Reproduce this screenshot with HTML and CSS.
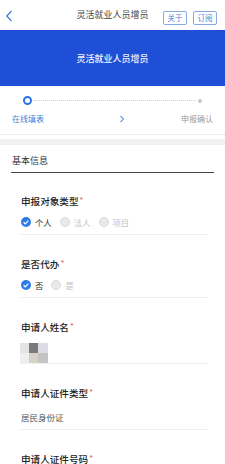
FILE: index.html
```html
<!DOCTYPE html>
<html lang="zh">
<head>
<meta charset="utf-8">
<link rel="stylesheet" href="styles.css">
</head>
<body>
<header class="nav">
  <svg class="back" width="8" height="12" viewBox="0 0 8 12"><path d="M6.5 1 L1.8 6 L6.5 11" fill="none" stroke="#4f86dc" stroke-width="1.4"/></svg>
  <div class="nav-title">灵活就业人员增员</div>
  <div class="nav-btns">
    <span class="nav-btn">关于</span>
    <span class="nav-btn">订阅</span>
  </div>
</header>
<div class="banner">灵活就业人员增员</div>
<section class="steps">
  <div class="track">
    <span class="dot-on"></span>
    <span class="track-line"></span>
    <span class="dot-off"></span>
  </div>
  <div class="step-labels">
    <span class="step-active">在线填表</span>
    <svg width="6" height="8" viewBox="0 0 6 8"><path d="M1.5 1 L4.5 4 L1.5 7" fill="none" stroke="#6b9be0" stroke-width="1.1"/></svg>
    <span class="step-next">申报确认</span>
  </div>
</section>
<div class="band"></div>
<div class="sec-title">基本信息</div>
<div class="field first">
  <div class="label">申报对象类型<span class="req">*</span></div>
  <div class="control radios">
    <span class="radio on"><i class="circ"><svg width="10" height="10" viewBox="0 0 10 10"><path d="M2.6 5.2 L4.3 6.8 L7.4 3.6" fill="none" stroke="#fff" stroke-width="1.2"/></svg></i>个人</span>
    <span class="radio off"><i class="circ"></i>法人</span>
    <span class="radio off"><i class="circ"></i>项目</span>
  </div>
</div>
<div class="field">
  <div class="label">是否代办<span class="req">*</span></div>
  <div class="control radios">
    <span class="radio on"><i class="circ"><svg width="10" height="10" viewBox="0 0 10 10"><path d="M2.6 5.2 L4.3 6.8 L7.4 3.6" fill="none" stroke="#fff" stroke-width="1.2"/></svg></i>否</span>
    <span class="radio off"><i class="circ"></i>是</span>
  </div>
</div>
<div class="field">
  <div class="label">申请人姓名<span class="req">*</span></div>
  <div class="control-name">
    <div class="mosaic">
      <span class="m1"></span><span class="m2"></span><span class="m3"></span>
      <span class="m4"></span><span class="m5"></span><span class="m6"></span>
    </div>
  </div>
</div>
<div class="field">
  <div class="label">申请人证件类型<span class="req">*</span></div>
  <div class="control value">居民身份证</div>
</div>
<div class="field">
  <div class="label">申请人证件号码<span class="req">*</span></div>
</div>
</body>
</html>
```
FILE: styles.css
```css
* { box-sizing: border-box; }
body {
  margin: 0;
  background: #fff;
  font-family: "Noto Sans CJK SC", "Noto Sans", sans-serif;
  color: #222;
  overflow: hidden;
}
.nav {
  height: 30px;
  display: flex;
  align-items: center;
  padding: 0 8px 0 5px;
  position: relative;
}
.back { display: block; margin-top: 2px; }
.nav-title {
  position: absolute;
  left: 0; right: 0;
  text-align: center;
  font-size: 9px;
  color: #444;
  line-height: 30px;
  pointer-events: none;
}
.nav-btns {
  margin-left: auto;
  display: flex;
  gap: 6px;
  margin-top: 6px;
}
.nav-btn {
  width: 24px;
  height: 14px;
  border: 1px solid #86a9e3;
  border-radius: 2px;
  font-size: 7.5px;
  line-height: 12px;
  text-align: center;
  color: #4a7fd6;
  background: #fff;
}
.banner {
  height: 56px;
  background: #1f4fd6;
  color: #f2f4fb;
  font-size: 9px;
  font-weight: 500;
  display: flex;
  align-items: center;
  justify-content: center;
  padding-top: 1px;
}
.steps {
  padding: 10px 12px 9px;
  border-bottom: 1px dotted #ddd;
}
.track {
  display: flex;
  align-items: center;
  height: 9px;
  padding-left: 11px;
  padding-right: 11px;
}
.dot-on {
  width: 9px; height: 9px;
  border-radius: 50%;
  border: 2.6px solid #2c74e6;
  background: #fff;
  flex: none;
}
.track-line {
  flex: 1;
  border-top: 1px dotted #cfcfcf;
  margin: 0 2px;
}
.dot-off {
  width: 4px; height: 4px;
  border-radius: 50%;
  background: #c8c8c8;
  flex: none;
}
.step-labels {
  margin-top: 8px;
  height: 12px;
  display: flex;
  align-items: center;
  justify-content: space-between;
  font-size: 8px;
  line-height: 12px;
}
.step-labels svg { margin-left: 18px; }
.step-active { color: #3f80d4; }
.step-next { color: #999; }
.band {
  height: 6px;
  margin-top: 4px;
  background: #f1f1f1;
}
.sec-title {
  margin: 0 11px;
  padding: 9px 0 4px 1px;
  font-size: 9px;
  line-height: 14px;
  color: #333;
  border-bottom: 1px solid #444;
}
.field {
  margin: 0 18px 0 20px;
  padding-top: 21px;
  border-bottom: 1px dotted #e2e2e2;
}
.field.first { padding-top: 20px; }
.field:last-child { border-bottom: none; }
.label {
  height: 14px;
  line-height: 14px;
  font-size: 9.6px;
  font-weight: 500;
  color: #222;
  padding-left: 1px;
}
.req {
  color: #e86a6a;
  font-size: 8px;
  margin-left: 1px;
  vertical-align: 2px;
}
.control {
  margin-top: 8px;
  height: 14px;
  line-height: 14px;
  margin-bottom: 5px;
}
.radios {
  display: flex;
  align-items: center;
  gap: 8px;
  padding-left: 1px;
}
.radio {
  display: flex;
  align-items: center;
  gap: 4px;
  font-size: 8.4px;
}
.circ {
  width: 10px; height: 10px;
  border-radius: 50%;
  display: block;
  flex: none;
}
.circ svg { display: block; }
.radio.on { color: #333; }
.radio.on .circ { background: #2f7be6; }
.radio.off { color: #c4c4c4; }
.radio.off .circ { background: #e9e9e9; border: 1px solid #dadada; }
.control-name {
  margin-top: 10px;
  height: 20px;
}
.mosaic {
  display: grid;
  grid-template-columns: 9px 9px 10px;
  grid-template-rows: 10px 10px;
  width: 28px;
  margin-left: 0;
}
.m1 { background: #e4e4e4; }
.m2 { background: #7a7a7a; }
.m3 { background: #dcdce4; }
.m4 { background: #eeeeee; }
.m5 { background: #d6d2c8; }
.m6 { background: #c4c4c4; }
.value {
  margin-top: 11px;
  font-size: 8.5px;
  color: #555;
  padding-left: 1px;
}
```
